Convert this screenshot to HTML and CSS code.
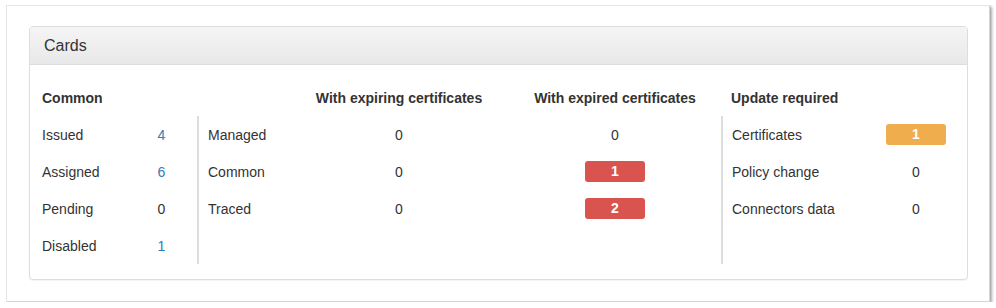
FILE: index.html
```
<!DOCTYPE html>
<html lang="en">
<head>
    <meta charset="UTF-8">
    <title>Cards</title>
    <link rel="stylesheet" href="styles.css">
</head>
<body>
    <div class="frame">
        <div class="panel">
            <div class="panel-heading">Cards</div>
            <div class="panel-body">
                <div class="group group-common">
                    <div class="group-head">
                        <span class="head-label">Common</span>
                    </div>
                    <div class="group-rows">
                        <div class="row"><span class="name">Issued</span><span class="val"><a href="#">4</a></span></div>
                        <div class="row"><span class="name">Assigned</span><span class="val"><a href="#">6</a></span></div>
                        <div class="row"><span class="name">Pending</span><span class="val">0</span></div>
                        <div class="row"><span class="name">Disabled</span><span class="val"><a href="#">1</a></span></div>
                    </div>
                </div>

                <div class="group group-certs">
                    <div class="group-head">
                        <span></span>
                        <span class="head-center">With expiring certificates</span>
                        <span class="head-center">With expired certificates</span>
                    </div>
                    <div class="group-rows with-line">
                        <div class="row"><span class="name">Managed</span><span class="val">0</span><span class="val">0</span></div>
                        <div class="row"><span class="name">Common</span><span class="val">0</span><span class="val"><span class="badge badge-danger">1</span></span></div>
                        <div class="row"><span class="name">Traced</span><span class="val">0</span><span class="val"><span class="badge badge-danger">2</span></span></div>
                    </div>
                </div>

                <div class="group group-update">
                    <div class="group-head">
                        <span class="head-label">Update required</span>
                    </div>
                    <div class="group-rows with-line">
                        <div class="row"><span class="name">Certificates</span><span class="val"><span class="badge badge-warning">1</span></span></div>
                        <div class="row"><span class="name">Policy change</span><span class="val">0</span></div>
                        <div class="row"><span class="name">Connectors data</span><span class="val">0</span></div>
                    </div>
                </div>
            </div>
        </div>
    </div>
</body>
</html>
```

FILE: styles.css
```
body {
    margin: 5px 0 0 6px;
    padding: 0;
    background: #fff;
    font-family: "Liberation Sans", Arial, sans-serif;
    font-size: 14px;
    color: #333;
}

.frame {
    width: 984px;
    height: 297px;
    box-sizing: border-box;
    background: #fff;
    border: 1px solid #e6e6e6;
    border-right-color: #d4d4d4;
    border-bottom-color: #d4d4d4;
    box-shadow: 0 0 3px rgba(0, 0, 0, 0.2), 2px 2px 3px rgba(0, 0, 0, 0.3);
    padding: 20px 21px 0 22px;
}

.panel {
    border: 1px solid #ddd;
    border-radius: 4px;
    box-shadow: 0 1px 1px rgba(0, 0, 0, 0.05);
    background: #fff;
}

.panel-heading {
    height: 38px;
    box-sizing: border-box;
    padding: 10px 14px;
    font-size: 16px;
    line-height: 18px;
    color: #333;
    background: linear-gradient(to bottom, #f5f5f5 0%, #e8e8e8 100%);
    border-bottom: 1px solid #ddd;
    border-top-left-radius: 3px;
    border-top-right-radius: 3px;
}

.panel-body {
    display: flex;
    padding: 15px 15px 15px 12px;
}

.group-head {
    display: grid;
    height: 36px;
    align-items: center;
    font-weight: bold;
}

.group-rows {
    height: 148px;
}

.head-center {
    text-align: center;
}

.row {
    display: grid;
    height: 37px;
    align-items: center;
}

.val {
    text-align: center;
}

.val a {
    color: #337ab7;
    text-decoration: none;
}

.with-line {
    border-left: 2px solid #ddd;
    padding-left: 9px;
}

.group-common {
    width: 155px;
}

.group-common .row {
    grid-template-columns: 100px 39px;
}

.group-certs .group-head,
.group-certs .row {
    grid-template-columns: 81px 220px 212px;
}

.group-certs .group-head {
    padding-left: 11px;
}

.group-certs {
    width: 524px;
}

.group-update .group-head {
    padding-left: 10px;
}

.group-update .row {
    grid-template-columns: 154px 60px;
}

.badge {
    display: inline-block;
    width: 60px;
    height: 21px;
    line-height: 21px;
    border-radius: 3px;
    color: #fff;
    font-weight: bold;
    font-size: 14px;
    vertical-align: middle;
}

.badge-danger {
    background-color: #d9534f;
}

.badge-warning {
    background-color: #f0ad4e;
}
```
